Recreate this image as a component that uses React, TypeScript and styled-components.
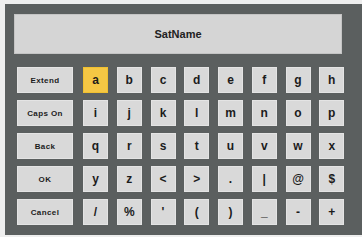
import React from "react";
import styled, { createGlobalStyle } from "styled-components";

const Global = createGlobalStyle`
  html, body { margin: 0; padding: 0; background: #eeeeee; }
  body { font-family: "Liberation Sans", Arial, sans-serif; }
`;

const Page = styled.div`
  width: 362px;
  height: 237px;
  padding: 4px 0 0 5px;
  box-sizing: border-box;
  overflow: hidden;
`;

const Panel = styled.div`
  width: 362px;
  height: 231px;
  box-sizing: border-box;
  background: #5b5f5f;
  padding: 10px 0 0 9px;
  display: flex;
  flex-direction: column;
  gap: 13px;
`;

const NameBox = styled.div`
  width: 328px;
  height: 40px;
  box-sizing: border-box;
  background: #d5d5d5;
  border: 1px solid #c4c4c4;
  display: flex;
  align-items: center;
  justify-content: center;
  font-size: 11px;
  font-weight: bold;
  color: #222;
`;

const Grid = styled.div`
  margin-left: 3px;
  display: grid;
  grid-template-columns: 57.25px repeat(8, 25px);
  grid-auto-rows: 26px;
  column-gap: 8.75px;
  row-gap: 7px;
`;

const Key = styled.div<{ $active?: boolean; $wide?: boolean }>`
  width: ${(p) => (p.$wide ? "56px" : "25px")};
  height: 26px;
  box-sizing: border-box;
  background: ${(p) => (p.$active ? "#f5c744" : "#d9d9d9")};
  border: 1px solid ${(p) => (p.$active ? "#f0c030" : "#e4e4e4")};
  display: flex;
  align-items: center;
  justify-content: center;
  color: #1c1c1c;
  font-weight: bold;
  font-size: ${(p) => (p.$wide ? "8px" : "12px")};
  letter-spacing: ${(p) => (p.$wide ? "0.4px" : "0")};
`;

const rows: [string, string[]][] = [
  ["Extend", ["a", "b", "c", "d", "e", "f", "g", "h"]],
  ["Caps On", ["i", "j", "k", "l", "m", "n", "o", "p"]],
  ["Back", ["q", "r", "s", "t", "u", "v", "w", "x"]],
  ["OK", ["y", "z", "<", ">", ".", "|", "@", "$"]],
  ["Cancel", ["/", "%", "'", "(", ")", "_", "-", "+"]],
];

export default function App() {
  return (
    <Page>
      <Global />
      <Panel>
        <NameBox>SatName</NameBox>
        <Grid>
          {rows.map(([label, keys]) => (
            <React.Fragment key={label}>
              <Key $wide>{label}</Key>
              {keys.map((k) => (
                <Key key={k} $active={k === "a"}>
                  {k}
                </Key>
              ))}
            </React.Fragment>
          ))}
        </Grid>
      </Panel>
    </Page>
  );
}
